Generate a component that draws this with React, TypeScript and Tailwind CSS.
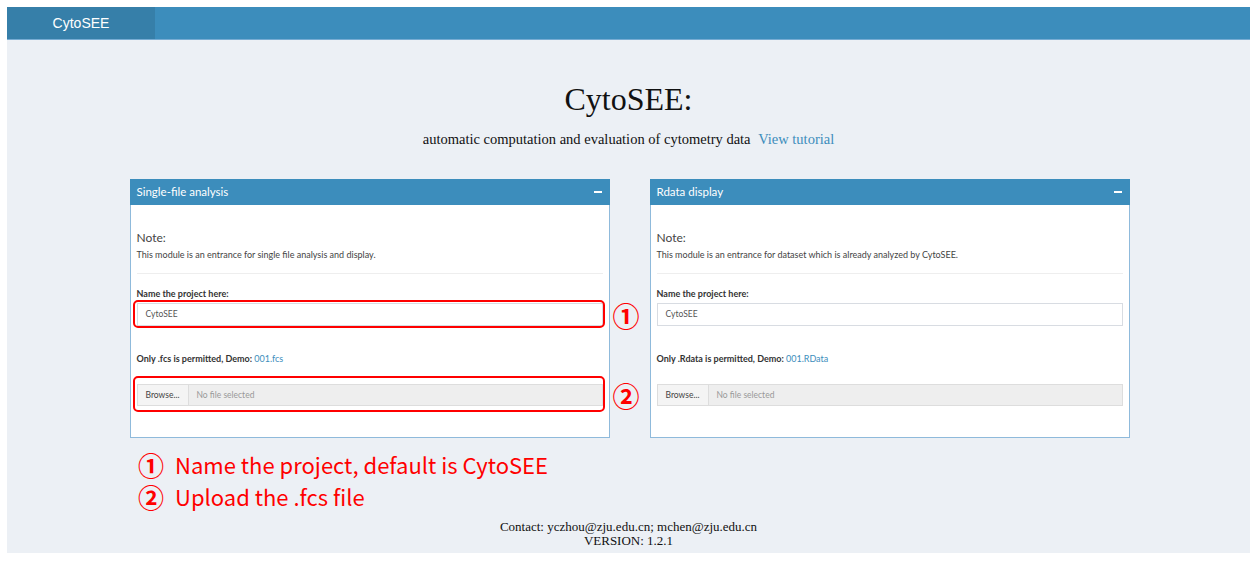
const sans = "font-['Lato','Open_Sans',sans-serif]";
const serif = "font-['Liberation_Serif','Times_New_Roman',serif]";
const cjk = "font-['Noto_Sans_CJK_SC','Noto_Sans',sans-serif]";

type BoxProps = {
  title: string;
  note: string;
  accept: string;
  demo: string;
  marked?: boolean;
};

function Marker({ n, className }: { n: string; className: string }) {
  return (
    <span
      className={`absolute left-full top-1/2 -translate-y-1/2 text-[27px] leading-none font-bold text-[#ff0000] ${cjk} ${className}`}
    >
      {n}
    </span>
  );
}

function Box({ title, note, accept, demo, marked }: BoxProps) {
  return (
    <div className={`w-[480px] h-[259px] flex flex-col bg-white border border-[#8fbadb] ${sans}`}>
      <div className="h-[26px] flex items-center justify-between bg-[#3c8dbc] pl-[7px] pr-[8px] -mx-px -mt-px">
        <span className="text-[11.5px] text-white">{title}</span>
        <span className="w-[8px] h-[2px] bg-white" />
      </div>
      <div className="px-[6px] flex flex-col">
        <p className="mt-[25px] text-[12px] leading-[16px] text-[#444]">Note:</p>
        <p className="mt-[3px] text-[9px] leading-[12px] text-[#444]">{note}</p>
        <div className="mt-[12px] h-px bg-[#eeeeee]" />
        <p className="mt-[14px] text-[9px] leading-[12px] font-bold text-[#333]">
          Name the project here:
        </p>
        <div className="relative mt-[3px]">
          <div className="h-[23px] flex items-center px-[8px] border border-[#d8dce2] text-[8.5px] text-[#555]">
            CytoSEE
          </div>
          {marked && (
            <>
              <div className="absolute -left-[4px] -right-[2px] -top-[3px] -bottom-[2px] border-2 border-[#ff0000] rounded-[5px]" />
              <Marker n="①" className="ml-[10px]" />
            </>
          )}
        </div>
        <p className="mt-[27px] text-[9px] leading-[12px] font-bold text-[#333]">
          {accept}, Demo: <span className="font-normal text-[#3c8dbc]">{demo}</span>
        </p>
        <div className="relative mt-[19px]">
          <div className="h-[22px] flex border border-[#dddddd] text-[8.5px]">
            <div className="w-[51px] flex items-center justify-center bg-[#f4f4f4] border-r border-[#dddddd] text-[#444]">
              Browse...
            </div>
            <div className="flex-1 flex items-center px-[8px] bg-[#eeeeee] text-[#999]">
              No file selected
            </div>
          </div>
          {marked && (
            <>
              <div className="absolute -left-[4px] -right-[2px] -top-[8px] -bottom-[6px] border-2 border-[#ff0000] rounded-[5px]" />
              <Marker n="②" className="ml-[10px]" />
            </>
          )}
        </div>
      </div>
    </div>
  );
}

export default function App() {
  return (
    <div className="w-[1259px] h-[565px] bg-white p-[7px] pr-[9px]">
      <div className="h-[546px] flex flex-col bg-[#ecf0f5]">
        <header className="h-[33px] flex border-b border-[#77acd3] shrink-0">
          <div className="w-[148px] flex items-center justify-center bg-[#367fa9] text-white text-[14px] font-['Liberation_Sans',Arial,sans-serif]">
            CytoSEE
          </div>
          <div className="flex-1 bg-[#3c8dbc]" />
        </header>

        <h1 className={`mt-[40px] text-center text-[32px] leading-[38px] text-[#111] ${serif}`}>
          CytoSEE:
        </h1>
        <p className={`mt-[11px] text-center text-[14.5px] leading-[20px] text-[#111] ${serif}`}>
          automatic computation and evaluation of cytometry data{" "}
          <span className="ml-[4px] text-[#3c8dbc]">View tutorial</span>
        </p>

        <div className="mt-[30px] flex justify-center gap-[40px] pl-[2px]">
          <Box
            title="Single-file analysis"
            note="This module is an entrance for single file analysis and display."
            accept="Only .fcs is permitted"
            demo="001.fcs"
            marked
          />
          <Box
            title="Rdata display"
            note="This module is an entrance for dataset which is already analyzed by CytoSEE."
            accept="Only .Rdata is permitted"
            demo="001.RData"
          />
        </div>

        <div className={`mt-[11px] ml-[131px] flex flex-col gap-[1px] text-[22px] leading-[31px] text-[#ff0000] ${cjk}`}>
          <p className="flex items-center">
            <span className="text-[26px] leading-[31px] font-bold mr-[11px]">①</span>
            Name the project, default is CytoSEE
          </p>
          <p className="flex items-center">
            <span className="text-[26px] leading-[31px] font-bold mr-[11px]">②</span>
            Upload the .fcs file
          </p>
        </div>

        <div className={`mt-[8px] text-center text-[13px] leading-[14px] text-[#111] ${serif}`}>
          <p>Contact: yczhou@zju.edu.cn; mchen@zju.edu.cn</p>
          <p>VERSION: 1.2.1</p>
        </div>
      </div>
    </div>
  );
}
